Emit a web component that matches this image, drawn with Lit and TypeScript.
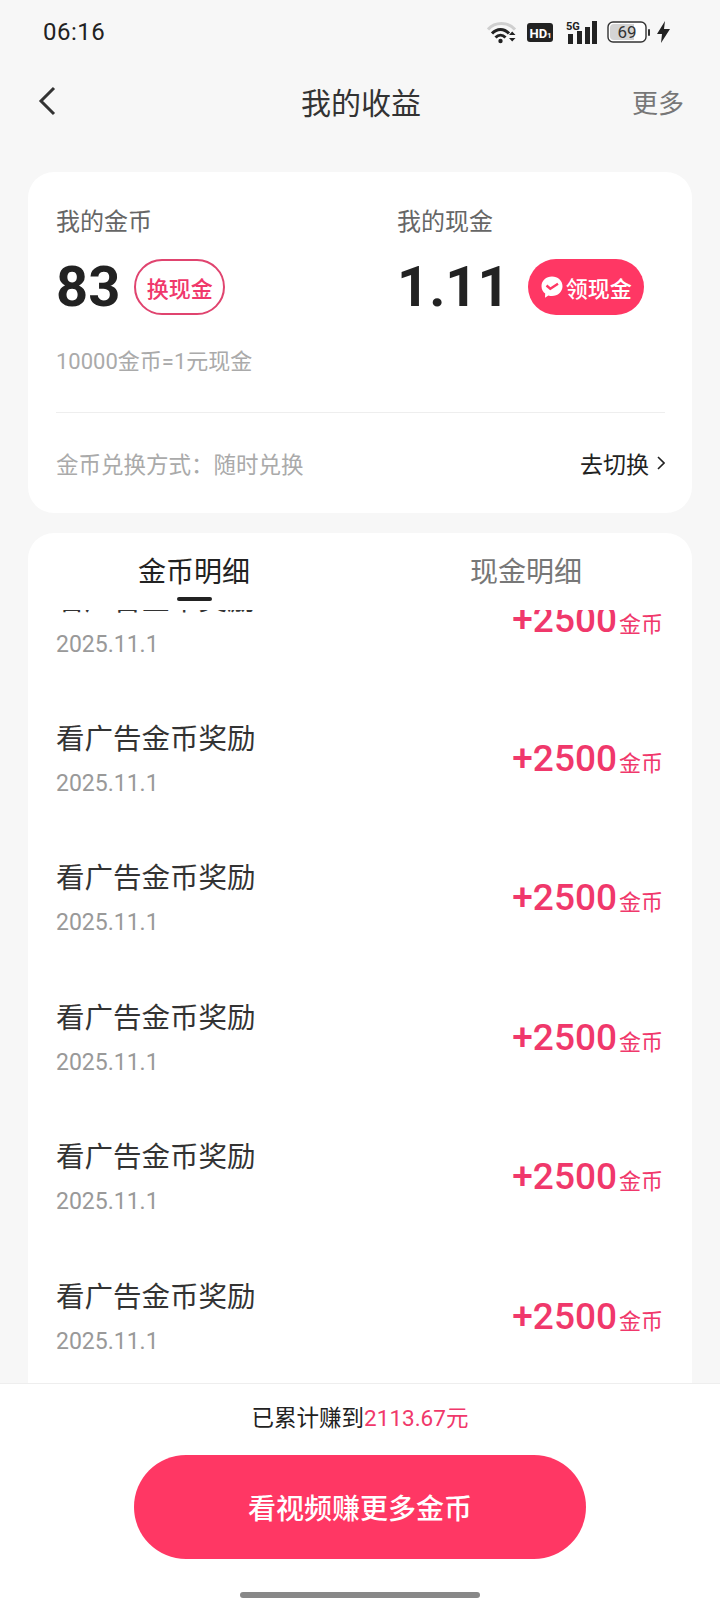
import { css, html, LitElement, svg } from "lit";
import { customElement } from "lit/decorators.js";

const rows = Array.from({ length: 7 }, () => ({ title: "看广告金币奖励", date: "2025.11.1", amount: "+2500" }));

const wifi_icon = svg`
  <path d="M1 9.5C8 1.5 21 1.5 28 9.5" fill="none" stroke="#cfcfcf" stroke-width="3"/>
  <path d="M5 13.5C10 8 17 8 22 13.5" fill="none" stroke="#222" stroke-width="3"/>
  <path d="M8.5 17.5C11.5 14.5 15.5 14.5 18.5 17.5" fill="none" stroke="#222" stroke-width="3"/>
  <circle cx="13.5" cy="21" r="2.2" fill="#222"/>
  <path d="M22 15l3.2-3.4 3.3 3.4zM22 18l3.2 3.4 3.3-3.4z" fill="#222"/>
`;

@customElement("app-root")
export class AppRoot extends LitElement {
  static styles = css`
    :host {
      display: block;
      font-family: Roboto, "Noto Sans CJK SC", sans-serif;
    }

    .page {
      width: 720px;
      height: 1612px;
      background: #f7f7f7;
      display: flex;
      flex-direction: column;
      overflow: hidden;
      color: #222;
    }

    .status {
      height: 64px;
      flex: none;
      padding: 0 50px 0 43px;
      display: flex;
      align-items: center;
      justify-content: space-between;
      box-sizing: border-box;
    }
    .time { font-size: 24px; letter-spacing: 0.5px; }
    .status-icons { display: flex; align-items: center; }
    .status-icons svg { display: block; }
    .hd { margin-left: 10px; }
    .net { margin-left: 13px; }
    .batt { margin-left: 10px; }
    .bolt { margin-left: 7px; }

    .nav {
      height: 76px;
      flex: none;
      padding: 0 36px 2px 38px;
      box-sizing: border-box;
      display: grid;
      grid-template-columns: 1fr auto 1fr;
      align-items: center;
    }
    .nav svg { display: block; }
    .nav-title { font-size: 30px; color: #333; }
    .nav-more { font-size: 26px; color: #777; justify-self: end; }

    .card {
      background: #fff;
      margin: 0 28px;
      border-radius: 26px;
      flex: none;
    }

    .summary {
      margin-top: 32px;
      height: 341px;
      padding: 0 27px 0 28px;
      box-sizing: border-box;
      display: flex;
      flex-direction: column;
    }
    .balances { display: flex; padding-top: 34px; height: 144px; box-sizing: border-box; flex: none; }
    .balance { width: 341px; flex: none; }
    .balance-label { font-size: 24px; line-height: 32px; color: #666; }
    .balance-row { display: flex; align-items: center; height: 56px; margin-top: 21px; }
    .balance-num { font-size: 56px; font-weight: 700; line-height: 56px; color: #222; }
    .btn-outline {
      margin-left: 14px;
      width: 91px;
      height: 56px;
      box-sizing: border-box;
      border: 2px solid #e0446f;
      border-radius: 28px;
      color: #f0386b;
      font-size: 22px;
      font-weight: 500;
      display: flex;
      align-items: center;
      justify-content: center;
    }
    .btn-fill {
      margin-left: 18px;
      width: 116px;
      height: 56px;
      border-radius: 28px;
      background: #ff3764;
      color: #fff;
      font-size: 22px;
      font-weight: 500;
      display: flex;
      align-items: center;
      justify-content: center;
      gap: 2px;
    }
    .rate { font-size: 22px; line-height: 30px; color: #aaa; margin-top: 31px; flex: none; }
    .divider { height: 1px; background: #eee; margin-top: 35px; flex: none; }
    .mode {
      flex: none;
      display: flex;
      align-items: center;
      justify-content: space-between;
      margin-top: 30px;
      height: 40px;
    }
    .mode-label { font-size: 22.5px; color: #aaa; }
    .mode-link { font-size: 23px; color: #222; display: flex; align-items: center; gap: 8px; }

    .detail {
      margin-top: 20px;
      flex: 1;
      min-height: 0;
      border-radius: 26px 26px 0 0;
      display: flex;
      flex-direction: column;
      overflow: hidden;
    }
    .tabs { display: flex; height: 77px; flex: none; position: relative; }
    .tab {
      flex: 1;
      text-align: center;
      font-size: 28px;
      line-height: 40px;
      padding-top: 20px;
      color: #777;
      position: relative;
    }
    .tab.active { color: #222; }
    .tab.active::after {
      content: "";
      position: absolute;
      left: 50%;
      bottom: 9px;
      width: 35px;
      height: 4px;
      margin-left: -17px;
      border-radius: 2px;
      background: #222;
    }
    .list { flex: 1; min-height: 0; overflow: hidden; }
    .list-inner { margin-top: -59px; }
    .row {
      height: 139.4px;
      padding: 0 28px;
      box-sizing: border-box;
      display: flex;
      align-items: center;
      justify-content: space-between;
    }
    .row-title { font-size: 28.5px; line-height: 40px; color: #333; margin-top: -1px; }
    .row-date { font-size: 23px; line-height: 30px; color: #999; margin-top: 9px; }
    .row-amount { display: flex; align-items: baseline; color: #f0386b; margin-right: 1px; margin-top: -3px; }
    .row-num { font-size: 37px; font-weight: 500; }
    .row-unit { font-size: 22px; margin-left: 2px; }

    .footer {
      height: 229px;
      flex: none;
      background: #fff;
      border-top: 1px solid #eee;
      box-sizing: border-box;
      display: flex;
      flex-direction: column;
      align-items: center;
    }
    .total { font-size: 22.5px; line-height: 32px; margin-top: 18px; color: #222; }
    .total span { color: #f0386b; }
    .cta {
      margin-top: 21px;
      width: 452px;
      height: 104px;
      border-radius: 52px;
      background: #ff3764;
      color: #fff;
      font-size: 28px;
      font-weight: 500;
      display: flex;
      align-items: center;
      justify-content: center;
    }
    .home { margin-top: 33px; width: 240px; height: 6px; border-radius: 3px; background: #888; }
  `;

  protected render() {
    return html`
      <div class="page">
        <div class="status">
          <span class="time">06:16</span>
          <div class="status-icons">
            <svg width="30" height="24" viewBox="0 0 30 24">${wifi_icon}</svg>
            <svg class="hd" width="26" height="19" viewBox="0 0 26 19">
              <rect width="26" height="19" rx="3" fill="#222"/>
              <text x="2.5" y="14.5" font-size="13" font-weight="700" font-family="Roboto" fill="#fff">HD</text>
              <text x="20" y="14.5" font-size="8" font-weight="700" font-family="Roboto" fill="#fff">1</text>
            </svg>
            <svg class="net" width="31" height="23" viewBox="0 0 31 23">
              <text x="0" y="9" font-size="11" font-weight="700" font-family="Roboto" fill="#222">5G</text>
              <rect x="2" y="13" width="5" height="10" fill="#222"/>
              <rect x="11" y="10" width="5" height="13" fill="#222"/>
              <rect x="19" y="6" width="5" height="17" fill="#222"/>
              <rect x="26" y="0" width="5" height="23" fill="#222"/>
            </svg>
            <svg class="batt" width="43" height="22" viewBox="0 0 43 22">
              <rect x="1" y="1" width="38" height="20" rx="5" fill="#fff" stroke="#333" stroke-width="1.4"/>
              <path d="M3 7a4 4 0 0 1 4-4h20v16H7a4 4 0 0 1-4-4z" fill="#d4d4d4"/>
              <text x="20" y="17" text-anchor="middle" font-size="17" font-family="Roboto" fill="#333">69</text>
              <rect x="41" y="8" width="2" height="7" rx="1" fill="#333"/>
            </svg>
            <svg class="bolt" width="13" height="22" viewBox="0 0 13 22">
              <path d="M8 0L0 13h5l-1 9 9-14H7z" fill="#222"/>
            </svg>
          </div>
        </div>

        <div class="nav">
          <svg width="18" height="30" viewBox="0 0 18 30">
            <path d="M16 2L3 15l13 13" fill="none" stroke="#333" stroke-width="3"/>
          </svg>
          <span class="nav-title">我的收益</span>
          <span class="nav-more">更多</span>
        </div>

        <div class="card summary">
          <div class="balances">
            <div class="balance">
              <div class="balance-label">我的金币</div>
              <div class="balance-row">
                <span class="balance-num">83</span>
                <span class="btn-outline">换现金</span>
              </div>
            </div>
            <div class="balance">
              <div class="balance-label">我的现金</div>
              <div class="balance-row">
                <span class="balance-num">1.11</span>
                <span class="btn-fill">
                  <svg width="24" height="24" viewBox="0 0 24 24">
                    <path d="M12 1.500c5.800 0 10.500 4.200 10.500 9.700S17.800 21 12 21c-1.300 0-2.500-.2-3.600-.6L5 22.800l.2-4.200C3 16.800 1.500 14.200 1.500 11.200 1.500 5.700 6.200 1.500 12 1.500z" fill="#fff"/>
                    <path d="M6.500 10.500l3.800 3.200 7.700-5" fill="none" stroke="#ff3764" stroke-width="2.400"/>
                  </svg>
                  领现金
                </span>
              </div>
            </div>
          </div>
          <div class="rate">10000金币=1元现金</div>
          <div class="divider"></div>
          <div class="mode">
            <span class="mode-label">金币兑换方式：随时兑换</span>
            <span class="mode-link">去切换
              <svg width="8" height="14" viewBox="0 0 8 14">
                <path d="M1 1l6 6-6 6" fill="none" stroke="#222" stroke-width="1.600"/>
              </svg>
            </span>
          </div>
        </div>

        <div class="card detail">
          <div class="tabs">
            <div class="tab active">金币明细</div>
            <div class="tab">现金明细</div>
          </div>
          <div class="list">
            <div class="list-inner">
              ${rows.map((row) => html`
                <div class="row">
                  <div>
                    <div class="row-title">${row.title}</div>
                    <div class="row-date">${row.date}</div>
                  </div>
                  <div class="row-amount">
                    <span class="row-num">${row.amount}</span>
                    <span class="row-unit">金币</span>
                  </div>
                </div>
              `)}
            </div>
          </div>
        </div>

        <div class="footer">
          <div class="total">已累计赚到<span>2113.67元</span></div>
          <div class="cta">看视频赚更多金币</div>
          <div class="home"></div>
        </div>
      </div>
    `;
  }
}
